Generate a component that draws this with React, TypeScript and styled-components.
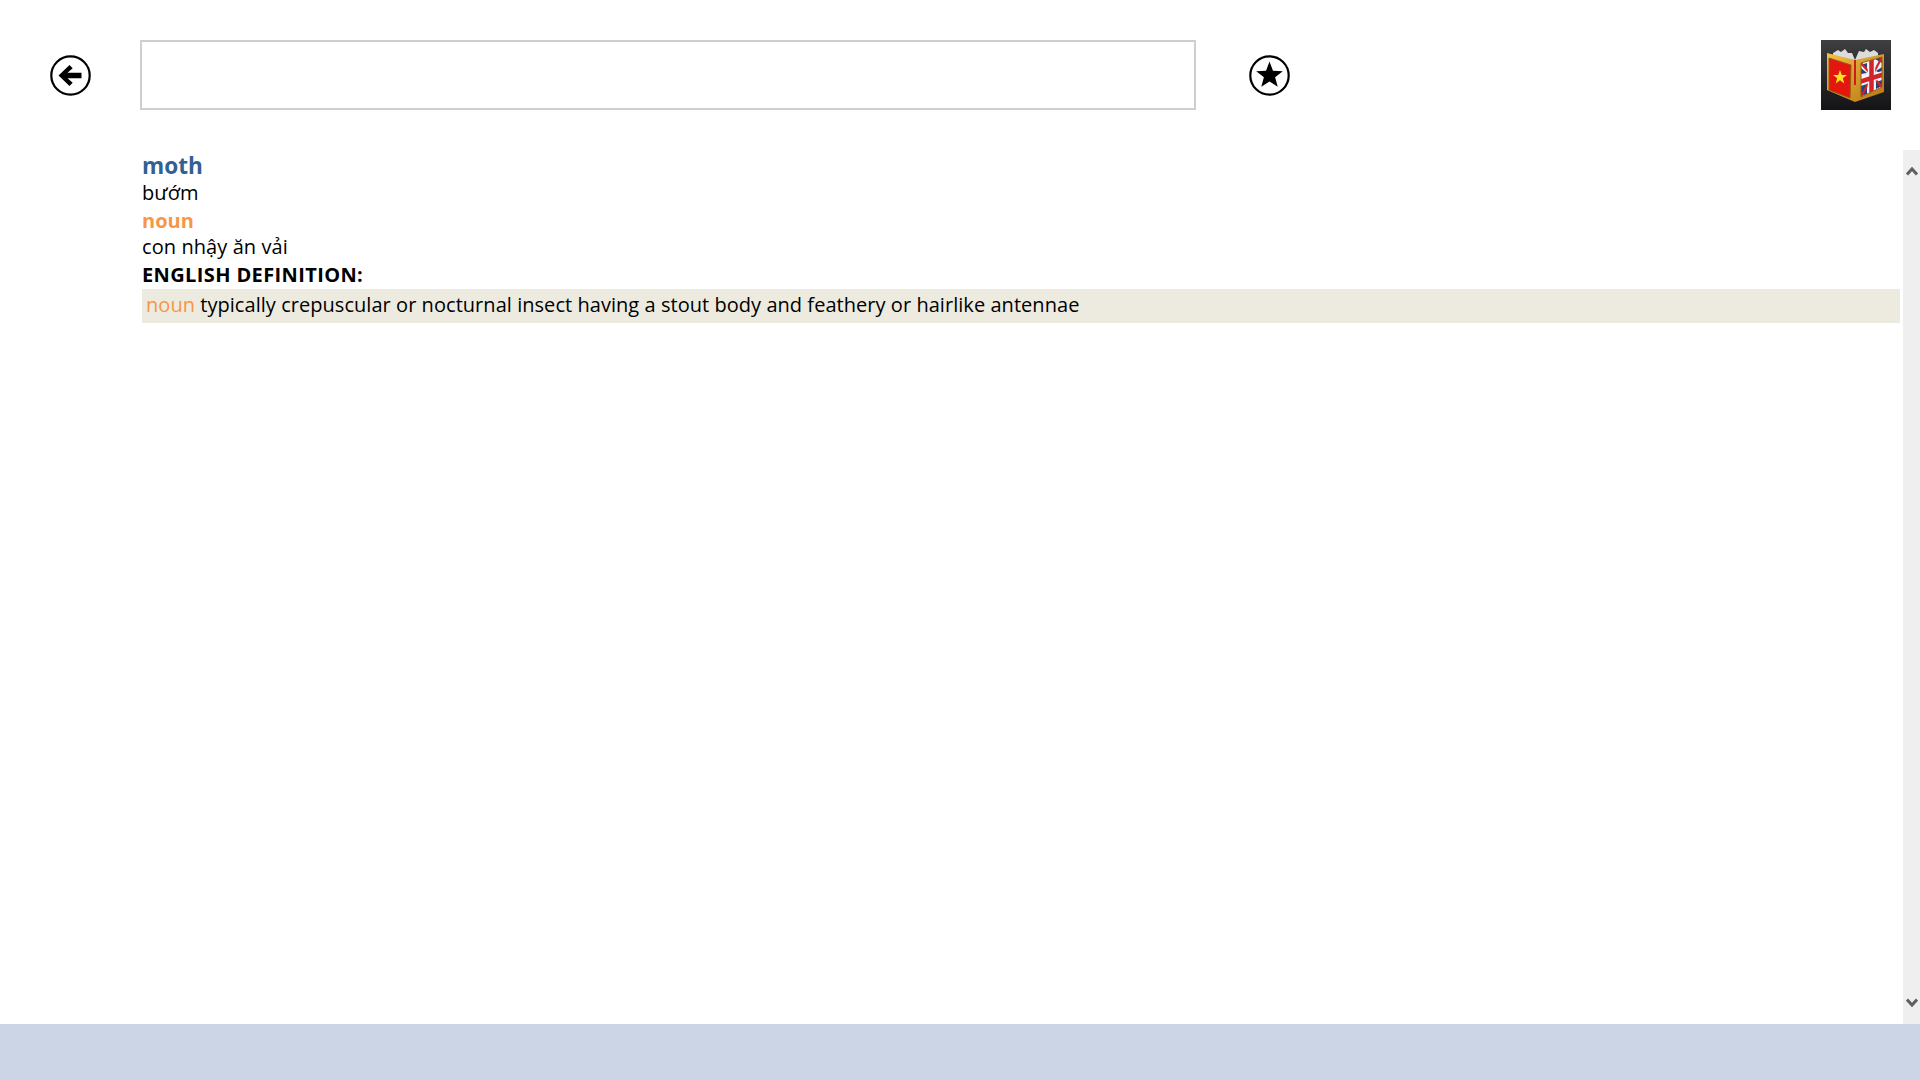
import React from "react";
import styled, { createGlobalStyle } from "styled-components";

const Global = createGlobalStyle`
  html, body { margin: 0; padding: 0; background: #fff; }
  body { font-family: "Open Sans", "Noto Sans", sans-serif; color: #000; overflow: hidden; }
`;

const Page = styled.div`
  width: 1920px;
  height: 1080px;
  display: flex;
  flex-direction: column;
  background: #fff;
`;

const Header = styled.header`
  height: 150px;
  flex: none;
  padding-top: 40px;
  box-sizing: border-box;
  display: flex;
  align-items: flex-start;
`;

const BackSlot = styled.div`
  width: 140px;
  height: 71px;
  flex: none;
  display: flex;
  align-items: center;
  padding-left: 50px;
  box-sizing: border-box;
`;

const SearchBox = styled.input`
  width: 1056px;
  height: 70px;
  flex: none;
  box-sizing: border-box;
  border: 2.5px solid #cfcfcf;
  background: #fff;
  outline: none;
`;

const StarSlot = styled.div`
  height: 71px;
  margin-left: 53px;
  display: flex;
  align-items: center;
`;

const Logo = styled.div`
  margin-left: auto;
  margin-right: 29px;
  width: 70px;
  height: 70px;
  flex: none;
`;

const Main = styled.main`
  flex: 1;
  min-height: 0;
  display: flex;
`;

const Content = styled.div`
  flex: 1;
  min-width: 0;
  padding: 0 3px 0 142px;
`;

const Word = styled.div`
  margin-top: 1px;
  height: 28px;
  font-size: 22.6px;
  line-height: 30px;
  font-weight: 700;
  color: #335f93;
`;

const Plain = styled.div`
  height: 27px;
  font-size: 20px;
  line-height: 27px;
  letter-spacing: 0.08px;
`;

const PartOfSpeech = styled.div`
  height: 27px;
  font-size: 20px;
  line-height: 29px;
  font-weight: 700;
  color: #f79646;
`;

const SectionTitle = styled.div`
  height: 27px;
  font-size: 20px;
  line-height: 29px;
  font-weight: 700;
  letter-spacing: 0.38px;
`;

const Definition = styled.div`
  margin-top: 2px;
  height: 34px;
  padding-left: 4px;
  background: #edebe0;
  font-size: 20px;
  line-height: 32px;
  letter-spacing: 0.045px;
  white-space: nowrap;
`;

const DefPos = styled.span`
  color: #f79646;
`;

const ScrollBar = styled.div`
  width: 17px;
  flex: none;
  background: #efefef;
  display: flex;
  flex-direction: column;
  justify-content: space-between;
  align-items: center;
  padding: 16px 0 16px;
  box-sizing: border-box;
`;

const Footer = styled.footer`
  height: 56px;
  flex: none;
  background: #cbd5e5;
`;

const BackIcon = () => (
  <svg width="41" height="41" viewBox="0 0 41 41">
    <circle cx="20.5" cy="20.5" r="19.2" fill="#fff" stroke="#000" strokeWidth="2.2" />
    <path d="M8.5 20.5 L19.5 10 L22.7 13.2 L17.5 17.8 H31.5 V23.2 H17.5 L22.7 27.8 L19.5 31 Z" fill="#000" />
  </svg>
);

const StarIcon = () => (
  <svg width="41" height="41" viewBox="0 0 41 41">
    <circle cx="20.5" cy="20.5" r="19.2" fill="#fff" stroke="#000" strokeWidth="2.2" />
    <path d="M20.5 6.5 L23.97 15.73 L33.8 16.17 L26.11 22.32 L28.73 31.8 L20.5 26.4 L12.27 31.8 L14.89 22.32 L7.2 16.17 L17.03 15.73 Z" fill="#000" />
  </svg>
);

const Chevron = ({ up }: { up: boolean }) => (
  <svg width="12" height="10" viewBox="0 0 12 10">
    <path d={up ? "M1 8.5 L6 3 L11 8.5" : "M1 1.5 L6 7 L11 1.5"} fill="none" stroke="#5f5f5f" strokeWidth="3" />
  </svg>
);

const BookLogo = () => (
  <svg width="70" height="70" viewBox="0 0 70 70">
    <defs>
      <linearGradient id="bg" x1="0" y1="0" x2="0" y2="1">
        <stop offset="0" stopColor="#3f3f41" />
        <stop offset="1" stopColor="#141416" />
      </linearGradient>
      <linearGradient id="gold" x1="0" y1="0" x2="1" y2="1">
        <stop offset="0" stopColor="#f4c04a" />
        <stop offset="1" stopColor="#b5760f" />
      </linearGradient>
      <clipPath id="uk">
        <path d="M40 23 L61 17 V47 L40 57 Z" />
      </clipPath>
    </defs>
    <rect width="70" height="70" fill="url(#bg)" />
    <path d="M12 13 L17 10 L20 12 L24 9 L27 13 L31 13 L34 20 L38 11 L43 12 L45 9 L49 12 L53 10 L57 13 V20 H12 Z" fill="#dcdcdc" />
    <path d="M6 13 L34 20 L63 14 V52 L34 62 L6 50 Z" fill="url(#gold)" />
    <path d="M8 18 L30 25 L29 58 L8 50 Z" fill="#e3170f" stroke="#9a5a12" strokeWidth="1" />
    <path d="M19 30 L20.8 35 H26 L21.8 38.3 L23.3 43.5 L19 40.3 L14.7 43.5 L16.2 38.3 L12 35 H17.2 Z" fill="#f8e61c" />
    <rect x="33" y="20" width="2" height="25" fill="#c9201a" />
    <g clipPath="url(#uk)">
      <rect x="38" y="14" width="26" height="46" fill="#f4f4f4" />
      <path d="M40 25 L46 23 V30 Z M54 19 L61 17 V23 Z M40 46 L46 44 V54 L40 56 Z M55 42 L61 40 V46 L55 49 Z M40 34 V28 L46 33 Z M61 27 V34 L55 31 Z" fill="#26407f" />
      <path d="M40 23 L61 47 M61 17 L40 57" stroke="#d2232a" strokeWidth="2.2" />
      <path d="M50.5 14 V60" stroke="#f4f4f4" strokeWidth="7.5" />
      <path d="M38 42 L64 34" stroke="#f4f4f4" strokeWidth="7.5" />
      <path d="M50.5 14 V60" stroke="#d2232a" strokeWidth="4.5" />
      <path d="M38 42 L64 34" stroke="#d2232a" strokeWidth="4.5" />
    </g>
    <path d="M40 23 L61 17 V47 L40 57 Z" fill="none" stroke="#9a5a12" strokeWidth="1" />
  </svg>
);

export default function App() {
  return (
    <Page>
      <Global />
      <Header>
        <BackSlot>
          <BackIcon />
        </BackSlot>
        <SearchBox aria-label="Search" />
        <StarSlot>
          <StarIcon />
        </StarSlot>
        <Logo>
          <BookLogo />
        </Logo>
      </Header>
      <Main>
        <Content>
          <Word>moth</Word>
          <Plain>bướm</Plain>
          <PartOfSpeech>noun</PartOfSpeech>
          <Plain>con nhậy ăn vải</Plain>
          <SectionTitle>ENGLISH DEFINITION:</SectionTitle>
          <Definition>
            <DefPos>noun</DefPos> typically crepuscular or nocturnal insect having a stout body and feathery or hairlike antennae
          </Definition>
        </Content>
        <ScrollBar>
          <Chevron up />
          <Chevron up={false} />
        </ScrollBar>
      </Main>
      <Footer />
    </Page>
  );
}
